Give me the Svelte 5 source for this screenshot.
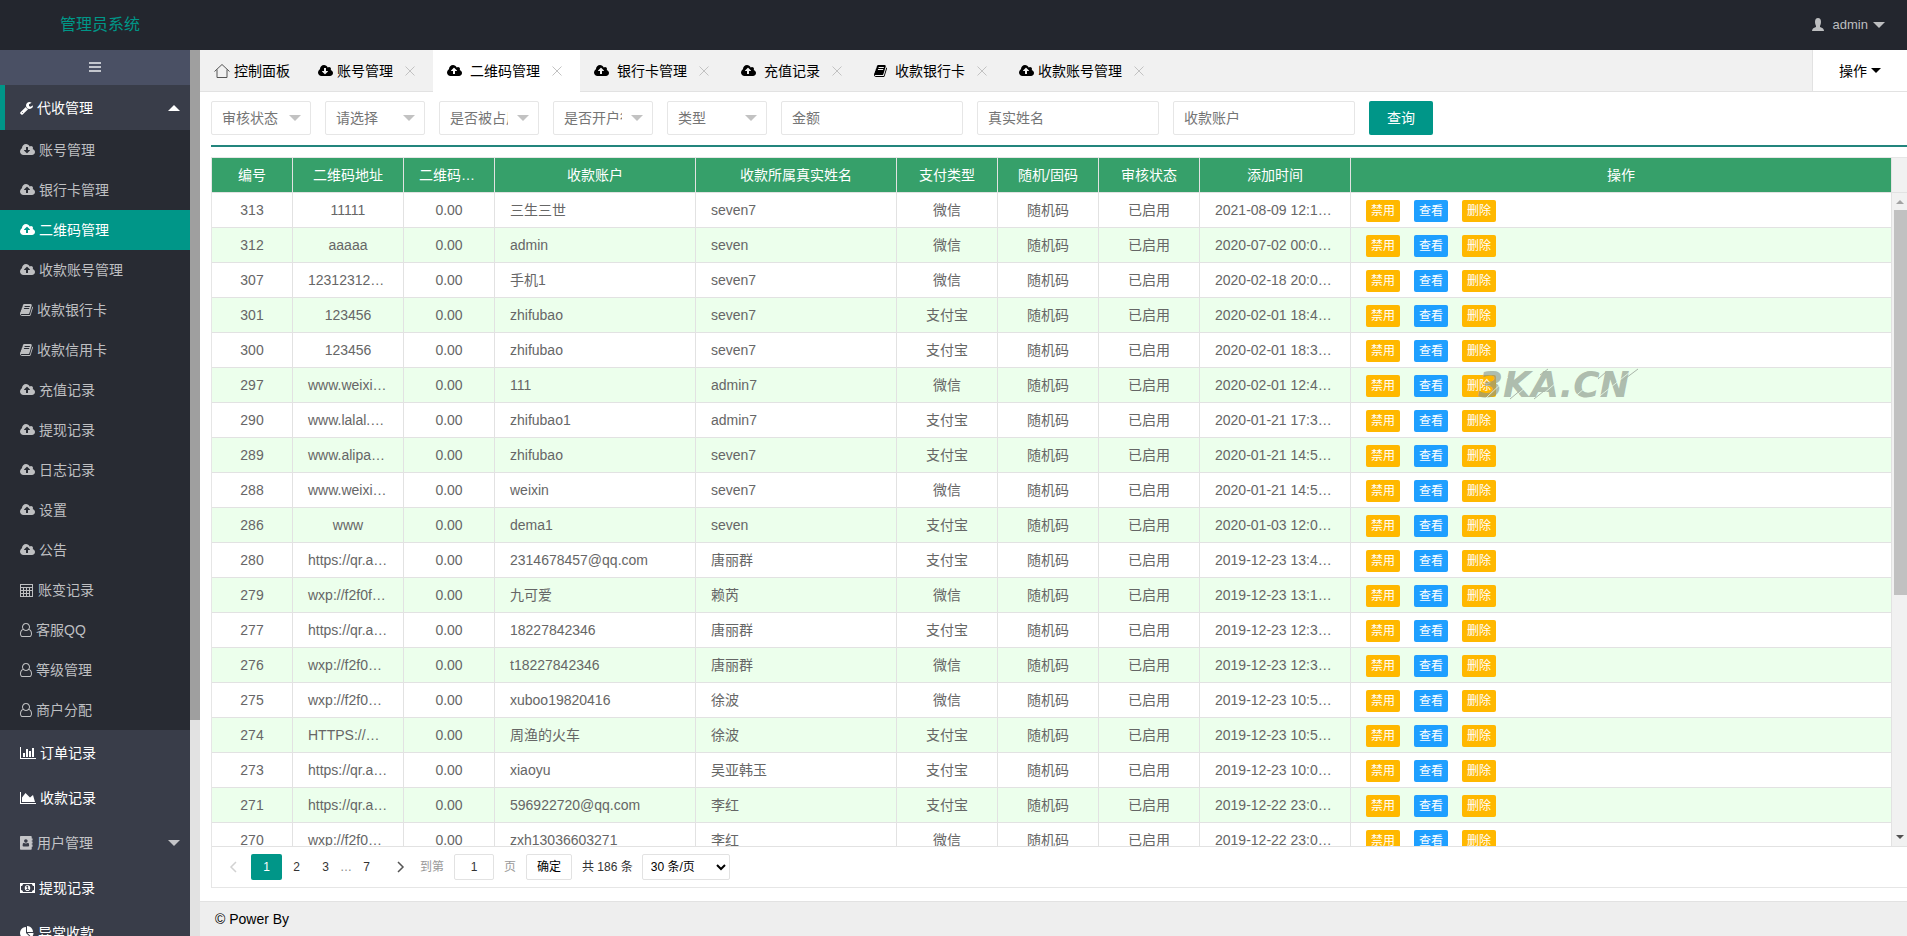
<script>
    const cloud = 'M1920 1152q0 159-112.5 271.5t-271.5 112.5h-1088q-185 0-316.5-131.5t-131.5-316.5q0-130 70-240t188-165q-2-30-2-43 0-212 150-362t362-150q156 0 285.5 87t188.5 231q71-62 166-62 106 0 181 75t75 181q0 76-41 138 130 31 213.5 135.5t83.5 238.5z';

    const icons = {
        up: { w: 1920, d: 'M1280 864q0-14-9-23l-352-352q-9-9-23-9t-23 9l-351 351q-10 12-10 24 0 14 9 23t23 9h224v352q0 13 9.5 22.5t22.5 9.5h192q13 0 22.5-9.5t9.5-22.5v-352h224q13 0 22.5-9.5t9.5-22.5z' + cloud },
        down: { w: 1920, d: 'M1280 928q0-14-9-23t-23-9h-224v-352q0-13-9.5-22.5t-22.5-9.5h-192q-13 0-22.5 9.5t-9.5 22.5v352h-224q-13 0-22.5 9.5t-9.5 22.5q0 14 9 23l352 352q9 9 23 9t23-9l351-351q10-12 10-24z' + cloud },
        wrench: { w: 1664, d: 'M384 1472q0-26-19-45t-45-19-45 19-19 45 19 45 45 19 45-19 19-45zm644-420l-682 682q-37 37-90 37-52 0-91-37l-106-108q-38-36-38-90 0-53 38-91l681-681q39 98 114.500 173.500t173.500 114.500zm634-435q0 39-23 106-47 134-164.500 217.500t-258.500 83.500q-185 0-316.500-131.500t-131.500-316.500 131.500-316.500 316.500-131.500q58 0 121.500 16.500t107.500 46.500q16 11 16 28t-16 28l-293 169v224l193 107q5-3 79-48.500t135.500-81 70.500-35.500q15 0 23.500 10t8.500 25z' },
        book: { w: 1664, d: 'M1639 478q40 57 18 129l-275 906q-19 64-76.500 107.500t-122.500 43.500h-923q-77 0-148.500-53.500t-99.500-131.500q-24-67-2-127 0-4 3-27t4-37q1-8-3-21.500t-3-19.500q2-11 8-21t16.500-23.500 16.500-23.500q23-38 45-91.500t30-91.500q3-10 .5-30t-.5-28q3-11 17-28t17-23q21-36 42-92t25-90q1-9-2.500-32t.5-28q4-13 22-30.500t22-22.500q19-26 42.500-84.500t27.500-96.500q1-8-3-25.500t-2-26.500q2-8 9-18t18-23 17-21q8-12 16.500-30.500t15-35 16-36 19.500-32 26.500-23.500 36-11.500 47.500 5.500l-1 3q38-9 51-9h761q74 0 114 56t18 130l-274 906q-36 119-71.500 153.500t-128.500 34.500h-869q-27 0-38 15-11 16-1 43 24 70 144 70h923q29 0 56-15.500t35-41.500l300-987q7-22 5-57 38 15 59 43zm-1064 2q-4 13 2 22.500t20 9.500h608q13 0 25.500-9.500t16.500-22.500l21-64q4-13-2-22.500t-20-9.500h-608q-13 0-25.500 9.500t-16.500 22.500zm-83 256q-4 13 2 22.500t20 9.500h608q13 0 25.500-9.500t16.500-22.500l21-64q4-13-2-22.500t-20-9.500h-608q-13 0-25.500 9.500t-16.500 22.500z' },
        calc: { w: 1792, d: 'M0 128h1664v1664h-1664zM128 256v256h1408v-256zM128 640v256h256v-256zM512 640v256h256v-256zM896 640v256h256v-256zM1280 640v256h256v-256zM128 1024v256h256v-256zM512 1024v256h256v-256zM896 1024v256h256v-256zM1280 1024v640h256v-640zM128 1408v256h256v-256zM512 1408v256h256v-256zM896 1408v256h256v-256z' },
        user: { w: 1536, d: 'M1201 784q47 14 89.500 38t89 73 79.500 115.500 55 172 22 236.500q0 154-100 263.500t-241 109.500h-854q-141 0-241-109.500t-100-263.500q0-131 22-236.500t55-172 79.500-115.500 89-73 89.500-38q-79-125-79-272 0-104 40.500-198.500t109.500-163.500 163.500-109.500 198.500-40.500 198.500 40.500 163.500 109.500 109.500 163.500 40.500 198.500q0 147-79 272zm-433-656q-159 0-271.500 112.500t-112.500 271.500 112.500 271.500 271.500 112.500 271.500-112.500 112.500-271.500-112.500-271.500-271.500-112.500zm427 1536q88 0 150.500-71.500t62.500-173.500q0-239-78.500-377t-225.500-145q-145 127-336 127t-336-127q-147 7-225.500 145t-78.500 377q0 102 62.500 173.500t150.500 71.500h854z' },
        bars: { w: 2048, d: 'M640 896v512h-256v-512zM1024 384v1024h-256v-1024zM2048 1536v128h-2048v-1536h128v1408zM1408 640v768h-256v-768zM1792 256v1152h-256v-1152z' },
        area: { w: 2048, d: 'M2048 1536v128h-2048v-1536h128v1408zM1664 512l256 896h-1664v-576l448-576 576 576z' },
        contact: { w: 1664, d: 'M100 0h1300q100 0 100 100v220h110v260h-110v130h110v260h-110v130h110v260h-110v300q0 100-100 100h-1300q-100 0-100-100v-1560q0-100 100-100zM750 400a230 230 0 1 0 1 0zM480 860q-150 40-150 340 0 130 130 130h580q130 0 130-130 0-300-150-340-110 90-270 90t-270-90z' },
        money: { w: 1920, d: 'M0 256h1920v1280h-1920zM384 384q0 106-75 181t-181 75v512q106 0 181 75t75 181h1152q0-106 75-181t181-75v-512q-106 0-181-75t-75-181zM960 512q150 0 250 110t100 274-100 274-250 110-250-110-100-274 100-274 250-110zM768 1152h384v-96h-114v-448h-114l-148 137 77 80 71-63v294h-156z' },
        pie: { w: 1792, d: 'M768 890l546 546q-106 108-247.500 168t-298.500 60q-209 0-385.500-103t-279.500-279.500-103-385.500 103-385.500 279.500-279.500 385.500-103v762zm187 6h773q0 157-60 298.500t-168 247.500zm709-128h-768v-768q209 0 385.500 103t279.500 279.500 103 385.500z' }
    };

    const menu = [
        ['账号管理', 'down'],
        ['银行卡管理', 'up'],
        ['二维码管理', 'up'],
        ['收款账号管理', 'up'],
        ['收款银行卡', 'book'],
        ['收款信用卡', 'book'],
        ['充值记录', 'up'],
        ['提现记录', 'up'],
        ['日志记录', 'up'],
        ['设置', 'up'],
        ['公告', 'up'],
        ['账变记录', 'calc'],
        ['客服QQ', 'user'],
        ['等级管理', 'user'],
        ['商户分配', 'user']
    ];

    const groups = [
        { name: '订单记录', icon: 'bars' },
        { name: '收款记录', icon: 'area' },
        { name: '用户管理', icon: 'contact', more: true },
        { name: '提现记录', icon: 'money' },
        { name: '异常收款', icon: 'pie' }
    ];

    const tabs = [
        { name: '账号管理', icon: 'down' },
        { name: '二维码管理', icon: 'up', wide: true },
        { name: '银行卡管理', icon: 'up', wide: true },
        { name: '充值记录', icon: 'up', wide: true },
        { name: '收款银行卡', icon: 'book', wide: true },
        { name: '收款账号管理', icon: 'up' }
    ];

    const selects = ['审核状态', '请选择', '是否被占用', '是否开户行', '类型'];
    const inputs = ['金额', '真实姓名', '收款账户'];
    const columns = ['编号', '二维码地址', '二维码…', '收款账户', '收款所属真实姓名', '支付类型', '随机/固码', '审核状态', '添加时间', '操作'];

    // id, url, account, real name, pay type, time
    const rows = [
        [313, '11111', '三生三世', 'seven7', '微信', '2021-08-09 12:1…'],
        [312, 'aaaaa', 'admin', 'seven', '微信', '2020-07-02 00:0…'],
        [307, '12312312…', '手机1', 'seven7', '微信', '2020-02-18 20:0…'],
        [301, '123456', 'zhifubao', 'seven7', '支付宝', '2020-02-01 18:4…'],
        [300, '123456', 'zhifubao', 'seven7', '支付宝', '2020-02-01 18:3…'],
        [297, 'www.weixi…', '111', 'admin7', '微信', '2020-02-01 12:4…'],
        [290, 'www.lalal.…', 'zhifubao1', 'admin7', '支付宝', '2020-01-21 17:3…'],
        [289, 'www.alipa…', 'zhifubao', 'seven7', '支付宝', '2020-01-21 14:5…'],
        [288, 'www.weixi…', 'weixin', 'seven7', '微信', '2020-01-21 14:5…'],
        [286, 'www', 'dema1', 'seven', '支付宝', '2020-01-03 12:0…'],
        [280, 'https://qr.a…', '2314678457@qq.com', '唐丽群', '支付宝', '2019-12-23 13:4…'],
        [279, 'wxp://f2f0f…', '九可爱', '赖芮', '微信', '2019-12-23 13:1…'],
        [277, 'https://qr.a…', '18227842346', '唐丽群', '支付宝', '2019-12-23 12:3…'],
        [276, 'wxp://f2f0…', 't18227842346', '唐丽群', '微信', '2019-12-23 12:3…'],
        [275, 'wxp://f2f0…', 'xuboo19820416', '徐波', '微信', '2019-12-23 10:5…'],
        [274, 'HTTPS://…', '周渔的火车', '徐波', '支付宝', '2019-12-23 10:5…'],
        [273, 'https://qr.a…', 'xiaoyu', '吴亚韩玉', '支付宝', '2019-12-23 10:0…'],
        [271, 'https://qr.a…', '596922720@qq.com', '李红', '支付宝', '2019-12-22 23:0…'],
        [270, 'wxp://f2f0…', 'zxh13036603271', '李红', '微信', '2019-12-22 23:0…']
    ];

    let current = $state('二维码管理');
    let page = $state(1);

    const isCut = (text) => text.endsWith('…');
</script>

{#snippet icon(name)}
    <svg class="fa" style:width="{Math.round(icons[name].w / 128)}px" viewBox="0 0 {icons[name].w} 1792" aria-hidden="true">
        <path fill-rule="evenodd" d={icons[name].d} />
    </svg>
{/snippet}

<div class="layout">
    <header>
        <a class="logo" href="#home">管理员系统</a>
        <a class="account" href="#admin">
            <svg width="14" height="14" viewBox="0 0 14 14" aria-hidden="true"><path d="M4 4q0-4 3-4t3 4q0 2-1 4v1q4 1 4 4H1q0-3 4-4V8Q4 6 4 4z" /></svg>
            <span>admin</span>
            <i class="caret"></i>
        </a>
    </header>

    <div class="main">
        <nav>
            <button class="toggle" aria-label="menu"><i></i><i></i><i></i></button>
            <a class="group open" href="#group">{@render icon('wrench')}<span>代收管理</span><i class="caret flip"></i></a>
            <ul>
                {#each menu as [name, pic]}
                    <li>
                        <a href="#{name}" class:active={current === name} onclick={() => (current = name)}>{@render icon(pic)}<span>{name}</span></a>
                    </li>
                {/each}
            </ul>
            {#each groups as item}
                <a class="group" class:dim={item.more} href="#{item.name}">
                    {@render icon(item.icon)}<span>{item.name}</span>
                    {#if item.more}<i class="caret"></i>{/if}
                </a>
            {/each}
        </nav>
        <div class="nav-scroll"><div></div></div>

        <main>
            <div class="tabs">
                <a class="tab home" href="#home">
                    <svg width="16" height="16" viewBox="0 0 16 16" aria-hidden="true"><path d="M.5 8.500L8 1.500l7.500 7M3 6.500v8h10v-8" /></svg>
                    <span>控制面板</span>
                </a>
                {#each tabs as tab}
                    <div class="tab" class:wide={tab.wide} class:this={current === tab.name}>
                        {@render icon(tab.icon)}
                        <span>{tab.name}</span>
                        <button class="close" aria-label="close"><svg width="10" height="10" viewBox="0 0 10 10"><path d="M.5.5l9 9M9.500.5l-9 9" /></svg></button>
                    </div>
                {/each}
                <button class="ops">操作<i></i></button>
            </div>

            <form class="filters" onsubmit={(e) => e.preventDefault()}>
                {#each selects as name}
                    <label class="pick">
                        <select aria-label={name}><option>{name}</option></select>
                    </label>
                {/each}
                {#each inputs as name}
                    <input type="text" placeholder={name} aria-label={name} />
                {/each}
                <button type="submit">查询</button>
            </form>

            <div class="grid">
                <div class="view">
                    <div class="rows">
                        <table>
                            <colgroup>
                                <col class="w80" /><col class="w110" /><col class="w90" /><col class="w200" /><col class="w200" />
                                <col class="w100" /><col class="w100" /><col class="w100" /><col class="w150" /><col />
                            </colgroup>
                            <thead>
                                <tr>
                                    {#each columns as name}
                                        <th class:left={isCut(name)}>{name}</th>
                                    {/each}
                                </tr>
                            </thead>
                            <tbody>
                                {#each rows as [id, url, account, owner, type, time]}
                                    <tr>
                                        <td>{id}</td>
                                        <td class:left={isCut(url)}>{url}</td>
                                        <td>0.00</td>
                                        <td class="left">{account}</td>
                                        <td class="left">{owner}</td>
                                        <td>{type}</td>
                                        <td>随机码</td>
                                        <td>已启用</td>
                                        <td class="left">{time}</td>
                                        <td>
                                            <div class="actions">
                                                <button>禁用</button>
                                                <button class="blue">查看</button>
                                                <button>删除</button>
                                            </div>
                                        </td>
                                    </tr>
                                {/each}
                            </tbody>
                        </table>
                    </div>
                    <div class="scroll">
                        <div class="corner"></div>
                        <i class="arrow-up"></i>
                        <div class="thumb"></div>
                        <i class="arrow-down"></i>
                    </div>
                    <svg class="mark" width="176" height="36" viewBox="0 0 176 36">
                        <text x="4" y="30">3KA.CN</text>
                        <path class="cut" d="M12 31L34 10M38 32L66 8M62 33l28-24M98 32l26-22M122 32l34-27" />
                        <path class="dash" d="M36 32l12-10M60 32l10-8M66 8l8-6M124 12l8-7M148 14l16-12" />
                    </svg>
                </div>

                <div class="pager">
                    <button class="step off" aria-label="prev"><svg width="8" height="12" viewBox="0 0 8 12"><path d="M7 1L2 6l5 5" /></svg></button>
                    {#each [1, 2, 3] as n}
                        <button class="num" class:on={page === n} onclick={() => (page = n)}>{n}</button>
                    {/each}
                    <span class="dots">…</span>
                    <button class="num" onclick={() => (page = 7)}>7</button>
                    <button class="step next" aria-label="next"><svg width="8" height="12" viewBox="0 0 8 12"><path d="M1 1l5 5-5 5" /></svg></button>
                    <label class="skip">到第<input type="text" value="1" />页</label>
                    <button class="go">确定</button>
                    <span class="count">共 186 条</span>
                    <select aria-label="条/页"><option>30 条/页</option></select>
                </div>
            </div>

            <footer>© Power By</footer>
        </main>
    </div>
</div>

<style>
    :global(body) {
        margin: 0;
        font: 14px/24px "Liberation Sans", Arial, "Noto Sans CJK SC", sans-serif;
        color: #000;
    }
    .layout, .layout * {
        box-sizing: border-box;
    }
    a {
        color: inherit;
        text-decoration: none;
    }
    button, input, select {
        font: inherit;
        margin: 0;
        padding: 0;
        border: 0;
        outline: none;
        color: inherit;
        background: none;
    }
    button {
        cursor: pointer;
    }
    .layout {
        display: flex;
        flex-direction: column;
        height: 100vh;
        overflow: hidden;
    }
    .fa {
        height: 14px;
        fill: currentColor;
        flex: none;
    }
    .caret {
        border: 6px solid transparent;
        border-top-color: currentColor;
        border-bottom: 0;
    }
    .flip {
        transform: rotate(180deg);
    }

    header {
        display: flex;
        align-items: center;
        justify-content: space-between;
        flex: none;
        height: 50px;
        padding: 0 22px 0 60px;
        background: #23262e;
    }
    .logo {
        font-size: 16px;
        color: #009688;
    }
    .account {
        display: flex;
        align-items: center;
        font-size: 13px;
        color: #bdbec0;
    }
    .account svg {
        fill: currentColor;
        margin-right: 8px;
    }
    .account span {
        margin-right: 5px;
    }

    .main {
        display: flex;
        flex: 1;
        min-height: 0;
    }
    nav {
        width: 190px;
        flex: none;
        overflow: hidden;
        background: #393d49;
    }
    .toggle {
        display: flex;
        flex-direction: column;
        align-items: center;
        justify-content: center;
        gap: 2px;
        width: 100%;
        height: 35px;
        padding-bottom: 2px;
        background: #4a5064;
    }
    .toggle i {
        width: 12px;
        height: 2px;
        background: #c3c6cd;
    }
    .group, li a {
        display: flex;
        align-items: center;
        gap: 4px;
        padding: 0 10px 0 20px;
    }
    .group {
        height: 45px;
        color: #fff;
    }
    .group.open {
        padding-left: 15px;
        border-left: 5px solid #009688;
    }
    .group .caret {
        margin-left: auto;
    }
    .dim {
        color: #c4c5c8;
    }
    ul {
        margin: 0;
        padding: 0;
        list-style: none;
        background: #282b33;
    }
    li a {
        height: 40px;
        color: #bebfc1;
    }
    li a.active {
        color: #fff;
        background: #009688;
    }
    .nav-scroll {
        width: 10px;
        flex: none;
        background: #e2e2e2;
    }
    .nav-scroll div {
        height: 670px;
        background: #9f9f9f;
    }

    main {
        display: flex;
        flex-direction: column;
        flex: 1;
        min-width: 0;
        background: #fff;
    }
    .tabs {
        display: flex;
        flex: none;
        height: 42px;
        background: #f1f1f1;
        border-bottom: 1px solid #e2e2e2;
    }
    .tab {
        display: flex;
        align-items: center;
        gap: 4px;
        height: 42px;
        padding: 0 18px 0 14px;
        white-space: nowrap;
    }
    .tab.wide {
        gap: 8px;
    }
    .home {
        padding: 0 14px;
    }
    .home svg {
        fill: none;
        stroke: #555;
    }
    .close {
        display: flex;
        margin-left: 8px;
    }
    .wide .close {
        margin-left: 4px;
    }
    .close svg {
        fill: none;
        stroke: #c2c2c2;
    }
    .this {
        background: #fff;
    }
    .ops {
        display: flex;
        align-items: center;
        justify-content: center;
        gap: 4px;
        width: 95px;
        margin-left: auto;
        background: #fff;
        border-left: 1px solid #e2e2e2;
    }
    .ops i {
        border: 5px solid transparent;
        border-top-color: #000;
        border-bottom: 0;
    }

    .filters {
        display: flex;
        flex: none;
        gap: 14px;
        margin: 0 0 10px 11px;
        padding: 9px 0 10px;
        border-bottom: 2px solid #23857d;
    }
    .pick {
        position: relative;
    }
    .pick::after {
        content: "";
        position: absolute;
        top: 14px;
        right: 10px;
        border: 6px solid transparent;
        border-top-color: #c2c2c2;
        border-bottom: 0;
        pointer-events: none;
    }
    .pick select {
        display: block;
        width: 100px;
        padding: 0 30px 0 10px;
        appearance: none;
    }
    .pick select, .filters input {
        height: 34px;
        border: 1px solid #e6e6e6;
        border-radius: 2px;
        color: #757575;
    }
    .filters input {
        width: 182px;
        padding: 0 10px;
    }
    .filters button {
        width: 64px;
        height: 34px;
        color: #fff;
        background: #009688;
        border-radius: 2px;
    }

    .grid {
        display: flex;
        flex-direction: column;
        flex: 1;
        min-height: 0;
        margin: 0 0 13px 11px;
        border: 1px solid #e6e6e6;
        border-right: 0;
    }
    .view {
        position: relative;
        display: flex;
        flex: 1;
        min-height: 0;
    }
    .rows {
        flex: 1;
        min-width: 0;
        overflow: hidden;
    }
    table {
        width: 100%;
        table-layout: fixed;
        border-collapse: separate;
        border-spacing: 0;
        color: #666;
    }
    .w80 { width: 81px; }
    .w90 { width: 91px; }
    .w100 { width: 101px; }
    .w110 { width: 111px; }
    .w150 { width: 151px; }
    .w200 { width: 201px; }
    th, td {
        height: 35px;
        padding: 0 12px;
        text-align: center;
        line-height: 28px;
        white-space: nowrap;
        border-right: 1px solid #e2e2e2;
        border-bottom: 1px solid #e2e2e2;
    }
    th {
        font-weight: 400;
        color: #fff;
        background: #36a06a;
    }
    .left {
        text-align: left;
        padding: 0 0 0 15px;
    }
    tbody tr:nth-child(even) {
        background: #ecffec;
    }
    .actions {
        display: flex;
        gap: 14px;
        padding: 1px 0 0 3px;
    }
    .actions button {
        width: 34px;
        height: 22px;
        font-size: 12px;
        line-height: 22px;
        color: #fff;
        background: #ffb800;
        border-radius: 2px;
    }
    .actions .blue {
        background: #1e9fff;
    }
    .scroll {
        display: flex;
        flex-direction: column;
        align-items: center;
        width: 15px;
        flex: none;
        background: #f1f1f1;
    }
    .corner {
        width: 100%;
        height: 35px;
        border-bottom: 1px solid #e2e2e2;
    }
    .arrow-up, .arrow-down {
        border: 4px solid transparent;
    }
    .arrow-up {
        margin: 7px 0 6px;
        border-top: 0;
        border-bottom-color: #a3a3a3;
    }
    .thumb {
        align-self: flex-end;
        width: 13px;
        height: 56%;
        background: #c1c1c1;
    }
    .arrow-down {
        margin: auto 0 7px;
        border-bottom: 0;
        border-top-color: #505050;
    }
    .mark {
        position: absolute;
        left: 1262px;
        top: 209px;
        pointer-events: none;
    }
    .mark text {
        font: italic bold 36px "DejaVu Sans", sans-serif;
        fill: #8a968a;
        fill-opacity: .65;
    }
    .mark path {
        fill: none;
    }
    .cut {
        stroke: #ecffec;
        stroke-opacity: .8;
    }
    .dash {
        stroke: #a9b5a9;
    }

    .pager {
        display: flex;
        align-items: center;
        flex: none;
        height: 41px;
        padding-left: 8px;
        border-top: 1px solid #e2e2e2;
        font-size: 12px;
        color: #333;
    }
    .pager button {
        height: 26px;
    }
    .step {
        display: flex;
        align-items: center;
        justify-content: center;
        width: 31px;
    }
    .step svg {
        fill: none;
        stroke: #555;
        stroke-width: 1.500;
    }
    .pager .off {
        padding-right: 6px;
    }
    .off svg {
        stroke: #d2d2d2;
    }
    .num {
        width: 29px;
        border-radius: 2px;
    }
    .num.on {
        width: 31px;
        color: #fff;
        background: #009688;
    }
    .dots {
        width: 12px;
        color: #888;
    }
    .next {
        margin-left: 4px;
    }
    .skip {
        color: #999;
        margin-left: 4px;
    }
    .skip input {
        width: 40px;
        height: 26px;
        margin: 0 10px;
        text-align: center;
        color: #333;
    }
    .skip input, .go, .pager select {
        border: 1px solid #e2e2e2;
        border-radius: 2px;
    }
    .go {
        width: 46px;
        margin: 0 10px;
        color: #000;
    }
    .pager select {
        width: 88px;
        height: 26px;
        margin-left: 9px;
        padding-left: 4px;
        color: #000;
    }

    footer {
        flex: none;
        height: 35px;
        padding: 0 15px;
        line-height: 34px;
        background: #eee;
        border-top: 1px solid #e2e2e2;
    }
</style>
